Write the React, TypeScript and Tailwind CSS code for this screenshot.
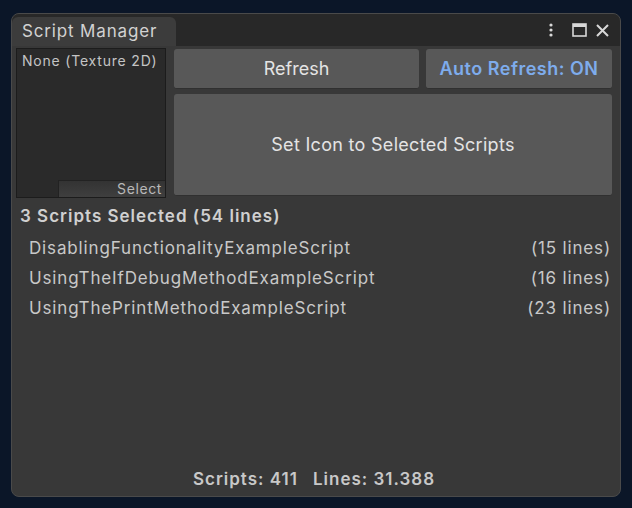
const scripts = [
  { name: 'DisablingFunctionalityExampleScript', lines: 15 },
  { name: 'UsingTheIfDebugMethodExampleScript', lines: 16 },
  { name: 'UsingThePrintMethodExampleScript', lines: 23 },
];

const font = { fontFamily: 'Inter, "Noto Sans", sans-serif' };

export default function App() {
  return (
    <div className="w-[632px] h-[508px] bg-[#0b1628] pt-[13px] pl-[11px]" style={font}>
      <div className="w-[610px] h-[484px] rounded-[8px] overflow-hidden flex flex-col bg-[#383838] border border-[#4a4a4a]">
        {/* Title bar */}
        <div className="h-[32px] bg-[#282828] flex items-end justify-between pr-[10px]">
          <div className="h-[29px] w-[164px] rounded-t-[6px] bg-[#3c3c3c] pl-[10px] flex items-center text-[17px] tracking-[0.85px] text-[#d2d2d2]">
            Script Manager
          </div>
          <div className="flex items-center h-[32px] text-[#d8d8d8]">
            <svg width="6" height="16" viewBox="0 0 6 16" className="mr-[18px]">
              <circle cx="3" cy="3" r="1.6" fill="currentColor" />
              <circle cx="3" cy="8" r="1.6" fill="currentColor" />
              <circle cx="3" cy="13" r="1.6" fill="currentColor" />
            </svg>
            <svg width="15" height="14" viewBox="0 0 15 14" className="mr-[8px]">
              <rect x="1" y="1" width="13" height="12" fill="none" stroke="currentColor" strokeWidth="1.6" />
              <rect x="1" y="1" width="13" height="3" fill="currentColor" />
            </svg>
            <svg width="15" height="15" viewBox="0 0 15 15">
              <path d="M2 2 L13 13 M13 2 L2 13" stroke="currentColor" strokeWidth="2" />
            </svg>
          </div>
        </div>

        {/* Content */}
        <div className="flex-1 flex flex-col pl-[4px] pr-[8px] pt-[2px]">
          <div className="flex gap-[8px] h-[150px]">
            {/* Texture field */}
            <div className="w-[150px] h-[150px] bg-[#2a2a2a] border border-[#1c1c1c] flex flex-col justify-between">
              <div className="text-[14px] tracking-[0.8px] text-[#c4c4c4] pl-[5px] pt-[2px] leading-[20px]">None (Texture 2D)</div>
              <div className="self-end w-[107px] h-[17px] bg-gradient-to-b from-[#333] to-[#3f3f3f] border-t border-l border-[#222] text-[14px] tracking-[0.6px] leading-[16px] text-[#b8b8b8] text-right pr-[3px]">
                Select
              </div>
            </div>
            {/* Buttons */}
            <div className="flex-1 flex flex-col gap-[5px] pt-[1px]">
              <div className="flex gap-[7px] h-[40px]">
                <button className="w-[245px] rounded-[3px] bg-[#585858] border-b border-[#303030] text-[18px] text-[#e4e4e4]">
                  Refresh
                </button>
                <button className="flex-1 rounded-[3px] bg-[#585858] border-b border-[#303030] text-[18px] tracking-[0.5px] font-semibold text-[#7eacec]">
                  Auto Refresh: ON
                </button>
              </div>
              <button className="h-[102px] rounded-[3px] bg-[#585858] border-b border-[#303030] text-[18px] tracking-[0.3px] text-[#e4e4e4]">
                Set Icon to Selected Scripts
              </button>
            </div>
          </div>

          <div className="pl-[4px] mt-[6px] text-[17px] tracking-[1px] font-semibold text-[#d0d0d0] leading-[24px]">
            3 Scripts Selected (54 lines)
          </div>

          <div className="flex flex-col mt-[6px] pl-[13px] pr-[1px]">
            {scripts.map((s) => (
              <div key={s.name} className="flex justify-between h-[30px] items-center text-[17px] tracking-[0.85px] text-[#c8c8c8]">
                <span>{s.name}</span>
                <span>({s.lines} lines)</span>
              </div>
            ))}
          </div>

          <div className="mt-auto mb-[4px] flex justify-center gap-[15px] text-[17px] tracking-[1px] font-semibold text-[#c8c8c8]">
            <span>Scripts: 411</span>
            <span>Lines: 31.388</span>
          </div>
        </div>
      </div>
    </div>
  );
}
